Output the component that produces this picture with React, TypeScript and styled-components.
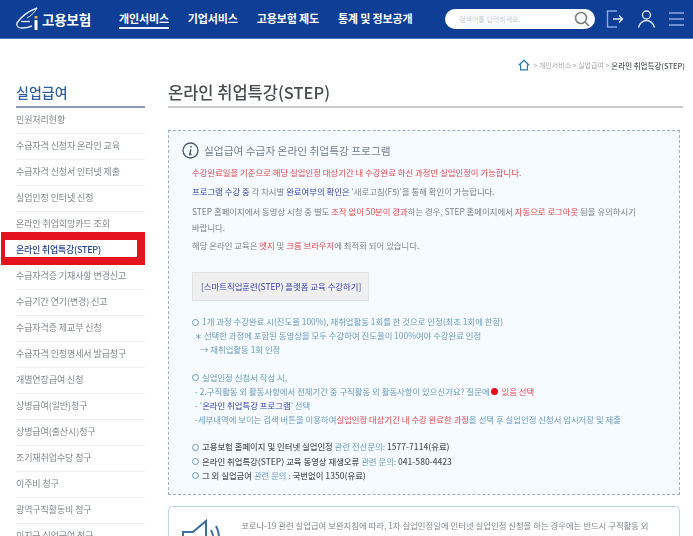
import React from 'react';
import styled, { createGlobalStyle } from 'styled-components';

const Global = createGlobalStyle`
    html, body {
        margin: 0;
        padding: 0;
        height: 536px;
        overflow: hidden;
        background: #fff;
    }
    * {
        box-sizing: border-box;
    }
    body {
        font-family: 'Noto Sans CJK KR', 'Noto Sans', sans-serif;
    }
`;

const Page = styled.div`
    width: 693px;
    height: 536px;
    overflow: hidden;
    filter: blur(0.6px);
`;

const Header = styled.header`
    display: flex;
    align-items: center;
    height: 39px;
    padding: 0 8px 0 15px;
    background: #0e3e96;
    border-bottom: 1px solid #4f74b4;
    color: #fff;
`;

const Logo = styled.div`
    display: flex;
    align-items: center;
    width: 104px;
    gap: 3px;
    font-size: 13.5px;
    font-weight: 700;
    letter-spacing: -0.2px;
`;

const Nav = styled.nav`
    display: flex;
    gap: 19px;
    width: 326px;
`;

const NavItem = styled.a<{ $active?: boolean }>`
    display: block;
    height: 20px;
    padding-top: 1px;
    font-size: 11px;
    line-height: 16px;
    font-weight: 700;
    letter-spacing: -0.15px;
    white-space: nowrap;
    border-bottom: 2px solid ${(p) => (p.$active ? '#e8eef8' : 'transparent')};
`;

const Search = styled.div`
    display: flex;
    align-items: center;
    justify-content: space-between;
    width: 150px;
    height: 20px;
    padding: 0 5px 0 14px;
    margin-right: 11px;
    background: #fff;
    border-radius: 10px;
    font-size: 7px;
    color: #c3cad3;
`;

const HeaderIcons = styled.div`
    display: flex;
    align-items: center;
    gap: 12px;
`;

const Body = styled.div`
    display: grid;
    grid-template-columns: 129px 515px;
    column-gap: 23px;
    padding: 0 0 0 16px;
`;

const Side = styled.aside`
    padding-top: 43px;
`;

const SideTitle = styled.h2`
    margin: 0;
    height: 26px;
    font-size: 14px;
    line-height: 20px;
    font-weight: 500;
    color: #2f5f9e;
    border-bottom: 2px solid #8c9ab8;
`;

const SideList = styled.ul`
    margin: 0;
    padding: 0;
    list-style: none;
`;

const SideItem = styled.li<{ $active?: boolean }>`
    position: relative;
    height: 26px;
    font-size: 9px;
    line-height: 24px;
    letter-spacing: ${(p) => (p.$active ? '-0.25px' : '-0.1px')};
    white-space: nowrap;
    color: ${(p) => (p.$active ? '#24458f' : '#83878d')};
    font-weight: ${(p) => (p.$active ? 500 : 400)};
    border-bottom: 1px solid #f1f2f4;
`;

const Highlight = styled.span`
    position: absolute;
    left: -15px;
    top: -6px;
    width: 144px;
    height: 33px;
    border: solid #e5121f;
    border-width: 8px 8px 8px 4px;
`;

const Main = styled.main`
    min-width: 0;
`;

const Crumbs = styled.div`
    display: flex;
    align-items: center;
    justify-content: flex-end;
    gap: 2px;
    height: 14px;
    margin: 19px -2px 0 0;
    font-size: 7px;
    color: #a4a7ac;
    white-space: nowrap;
`;

const CrumbCurrent = styled.b`
    color: #55585f;
    font-size: 7.5px;
    font-weight: 500;
`;

const PageTitle = styled.h1`
    margin: 10px 0 0;
    height: 26px;
    font-size: 16.5px;
    line-height: 20px;
    font-weight: 500;
    color: #4a4d52;
    border-bottom: 2px solid #c9cbce;
`;

const InfoBox = styled.section`
    width: 512px;
    height: 365px;
    margin-top: 22px;
    padding: 9px 24px 0 4px;
    background: #f6fbff;
    border: 1px dashed #9fb2c4;
    font-size: 8.4px;
    color: #7c8086;
`;

const InfoHead = styled.div`
    display: flex;
    align-items: center;
    gap: 5px;
    margin-left: 9px;
    height: 20px;
    font-size: 10.7px;
    color: #76808e;
`;

const Lines = styled.div`
    margin: 0 0 0 19px;
`;

const Para = styled.p<{ $gap?: number }>`
    margin: ${(p) => p.$gap ?? 0}px 0 0;
    line-height: 16px;
    word-break: keep-all;
`;

const Bullet = styled.p<{ $gap?: number; $indent?: number }>`
    margin: ${(p) => p.$gap ?? 0}px 0 0;
    padding-left: ${(p) => p.$indent ?? 0}px;
    line-height: 14.2px;
    color: #6c9abc;
    white-space: nowrap;
`;

const Red = styled.span`
    color: #e0484c;
`;

const Blue = styled.span`
    color: #3a41ad;
`;

const Dark = styled.span`
    color: #55585d;
    font-weight: 500;
`;

const Dot = styled.i`
    display: inline-block;
    width: 7px;
    height: 7px;
    margin-right: 3px;
    border-radius: 50%;
    background: #e10f17;
    vertical-align: -0.5px;
`;

const Ring = styled.i`
    display: inline-block;
    width: 7px;
    height: 7px;
    margin-right: 3px;
    border: 1px solid #6c9abc;
    border-radius: 50%;
    vertical-align: -0.5px;
`;

const PlayButton = styled.a`
    display: block;
    width: 177px;
    height: 29px;
    margin-top: 19px;
    padding-left: 8px;
    background: #efefef;
    border: 1px solid #e2e2e2;
    line-height: 27px;
    font-size: 8.4px;
    color: #3a41ad;
    white-space: nowrap;
`;

const NoticeBox = styled.section`
    display: flex;
    gap: 18px;
    width: 512px;
    height: 60px;
    margin-top: 11px;
    padding: 11px 14px 0 12px;
    border: 1px solid #b9d9e8;
    border-radius: 4px;
    font-size: 8.4px;
    line-height: 14px;
    color: #83878d;
`;

const SpeakerIcon = styled.svg`
    flex: none;
`;

const NoticeText = styled.p`
    margin: 0;
    word-break: keep-all;
`;

const menu = [
    '민원처리현황',
    '수급자격 신청자 온라인 교육',
    '수급자격 신청서 인터넷 제출',
    '실업인정 인터넷 신청',
    '온라인 취업희망카드 조회',
    '온라인 취업특강(STEP)',
    '수급자격증 기재사항 변경신고',
    '수급기간 연기(변경) 신고',
    '수급자격증 제교부 신청',
    '수급자격 인정명세서 발급청구',
    '개별연장급여 신청',
    '상병급여(일반)청구',
    '상병급여(출산시)청구',
    '조기재취업수당 청구',
    '이주비 청구',
    '광역구직활동비 청구',
    '미지급 실업급여 청구',
];

const App: React.FC = () => (
    <Page>
        <Global />
        <Header>
            <Logo>
                <svg width="24" height="24" viewBox="0 0 24 24" fill="none">
                    <path d="M22 1 C14 4 6 10 2 16 C1 19 3 21 7 21 C11 21 15 20 17 19" stroke="#dfe7f4" strokeWidth="1.4" />
                    <path d="M6 14.5 H15" stroke="#dfe7f4" strokeWidth="1.4" />
                    <path d="M22 1 C20 5 16 9 12 11" stroke="#dfe7f4" strokeWidth="1" />
                    <rect x="19.5" y="13" width="3" height="10" fill="#fff" />
                    <rect x="19.5" y="9" width="3" height="2.5" fill="#e3ad62" />
                </svg>
                <span>고용보험</span>
            </Logo>
            <Nav>
                <NavItem $active>개인서비스</NavItem>
                <NavItem>기업서비스</NavItem>
                <NavItem>고용보험 제도</NavItem>
                <NavItem>통계 및 정보공개</NavItem>
            </Nav>
            <Search>
                <span>검색어를 입력하세요.</span>
                <svg width="16" height="16" viewBox="0 0 16 16" fill="none" stroke="#7b8085" strokeWidth="1.6">
                    <circle cx="7" cy="7" r="5.5" />
                    <path d="M11 11 L15 15" />
                </svg>
            </Search>
            <HeaderIcons>
                <svg width="19" height="18" viewBox="0 0 19 18" fill="none" strokeWidth="1.4">
                    <path d="M11 1 H1.5 V17 H11" stroke="#8aa8e2" />
                    <path d="M7 9 H16 M13 5.5 L16.5 9 L13 12.5" stroke="#e4ecf8" />
                </svg>
                <svg width="19" height="18" viewBox="0 0 19 18" fill="none" stroke="#dbe5f5" strokeWidth="1.4">
                    <circle cx="9.5" cy="5" r="4" />
                    <path d="M1.5 17.5 C3 12.5 6 10.5 9.5 10.5 C13 10.5 16 12.5 17.5 17.5" />
                </svg>
                <svg width="17" height="16" viewBox="0 0 17 16" fill="none" stroke="#8aa8e2" strokeWidth="1.6">
                    <path d="M1 2 H16 M1 8 H16 M1 14 H16" />
                </svg>
            </HeaderIcons>
        </Header>
        <Body>
            <Side>
                <SideTitle>실업급여</SideTitle>
                <SideList>
                    {menu.map((label, i) => (
                        <SideItem key={label} $active={i === 5}>
                            {label}
                            {i === 5 && <Highlight />}
                        </SideItem>
                    ))}
                </SideList>
            </Side>
            <Main>
                <Crumbs>
                    <svg width="12" height="12" viewBox="0 0 12 12" fill="none" stroke="#2f7ea8" strokeWidth="1.2">
                        <path d="M0.8 6.2 L6 1.2 L11.2 6.2 M2.6 5.5 V10.8 H9.4 V5.5" />
                    </svg>
                    <span>&nbsp;&gt; 개인서비스 &gt; 실업급여 &gt;</span>
                    <CrumbCurrent>온라인 취업특강(STEP)</CrumbCurrent>
                </Crumbs>
                <PageTitle>온라인 취업특강(STEP)</PageTitle>
                <InfoBox>
                    <InfoHead>
                        <svg width="17" height="17" viewBox="0 0 17 17" fill="none">
                            <circle cx="8.5" cy="8.5" r="7.5" stroke="#4d5a70" strokeWidth="1.3" />
                            <path d="M9 4 V5.6 M8.8 7.4 L7.8 12.6 H9.6" stroke="#4d5a70" strokeWidth="1.5" />
                        </svg>
                        <span>실업급여 수급자 온라인 취업특강 프로그램</span>
                    </InfoHead>
                    <Lines>
                        <Para $gap={4}>
                            <Red>수강완료일을 기준으로 해당 실업인정 대상기간 내 수강완료 하신 과정만 실업인정이 가능합니다.</Red>
                        </Para>
                        <Para $gap={3}>
                            <Blue>프로그램 수강 중</Blue> 각 차시별 <Blue>완료여부의 확인은</Blue> ‘새로고침(F5)’을 통해 확인이 가능합니다.
                        </Para>
                        <Para $gap={4}>
                            STEP 홈페이지에서 동영상 시청 중 별도 <Red>조작 없이 50분이 경과</Red>하는 경우, STEP 홈페이지에서 <Red>자동으로 로그아웃</Red> 됨을 유의하시기 바랍니다.
                        </Para>
                        <Para $gap={2}>
                            해당 온라인 교육은 <Red>엣지</Red> 및 <Red>크롬 브라우저</Red>에 최적화 되어 있습니다.
                        </Para>
                        <PlayButton>[스마트직업훈련(STEP) 플랫폼 교육 수강하기]</PlayButton>
                        <Bullet $gap={13}>
                            <Ring />1개 과정 수강완료 시(진도율 100%), 재취업활동 1회를 한 것으로 인정(최초 1회에 한함)
                        </Bullet>
                        <Bullet $indent={3}>∗ 선택한 과정에 포함된 동영상을 모두 수강하여 진도율이 100%여야 수강완료 인정</Bullet>
                        <Bullet $indent={8}>→ 재취업활동 1회 인정</Bullet>
                        <Bullet $gap={13}>
                            <Ring />실업인정 신청서 작성 시,
                        </Bullet>
                        <Bullet $indent={3}>
                            - 2.구직활동 외 활동사항에서 전체기간 중 구직활동 외 활동사항이 있으신가요? 질문에 <Dot />
                            <Red>있음 선택</Red>
                        </Bullet>
                        <Bullet $indent={3}>
                            - ‘<Blue>온라인 취업특강 프로그램</Blue>’ 선택
                        </Bullet>
                        <Bullet $indent={3}>
                            -세부내역에 보이는 검색 버튼을 이용하여<Red>실업인정 대상기간 내 수강 완료한 과정</Red>을 선택 후 실업인정 신청서 임시저장 및 제출
                        </Bullet>
                        <Bullet $gap={13}>
                            <Ring />
                            <Dark>고용보험 홈페이지 및 인터넷 실업인정</Dark> 관련 전산문의: <Dark>1577-7114(유료)</Dark>
                        </Bullet>
                        <Bullet>
                            <Ring />
                            <Dark>온라인 취업특강(STEP) 교육 동영상 재생오류</Dark> 관련 문의: <Dark>041-580-4423</Dark>
                        </Bullet>
                        <Bullet>
                            <Ring />
                            <Dark>그 외 실업급여</Dark> 관련 문의 : <Dark>국번없이 1350(유료)</Dark>
                        </Bullet>
                    </Lines>
                </InfoBox>
                <NoticeBox>
                    <SpeakerIcon width="42" height="42" viewBox="0 0 42 42" fill="none" stroke="#3f6f9c" strokeWidth="2">
                        <path d="M2 14 H12 L25 3 V40 L12 30 H2 Z" />
                        <path d="M30 12 C33 17 33 26 30 31 M35 8 C39 15 39 28 35 35" />
                    </SpeakerIcon>
                    <NoticeText>
                        코로나-19 관련 실업급여 보완지침에 따라, 1차 실업인정일에 인터넷 실업인정 신청을 하는 경우에는 반드시 구직활동 외
                        활동사항으로 1차 <Red>실업인정일 교육동영상</Red> 수강을 하여합니다.
                    </NoticeText>
                </NoticeBox>
            </Main>
        </Body>
    </Page>
);

export default App;
